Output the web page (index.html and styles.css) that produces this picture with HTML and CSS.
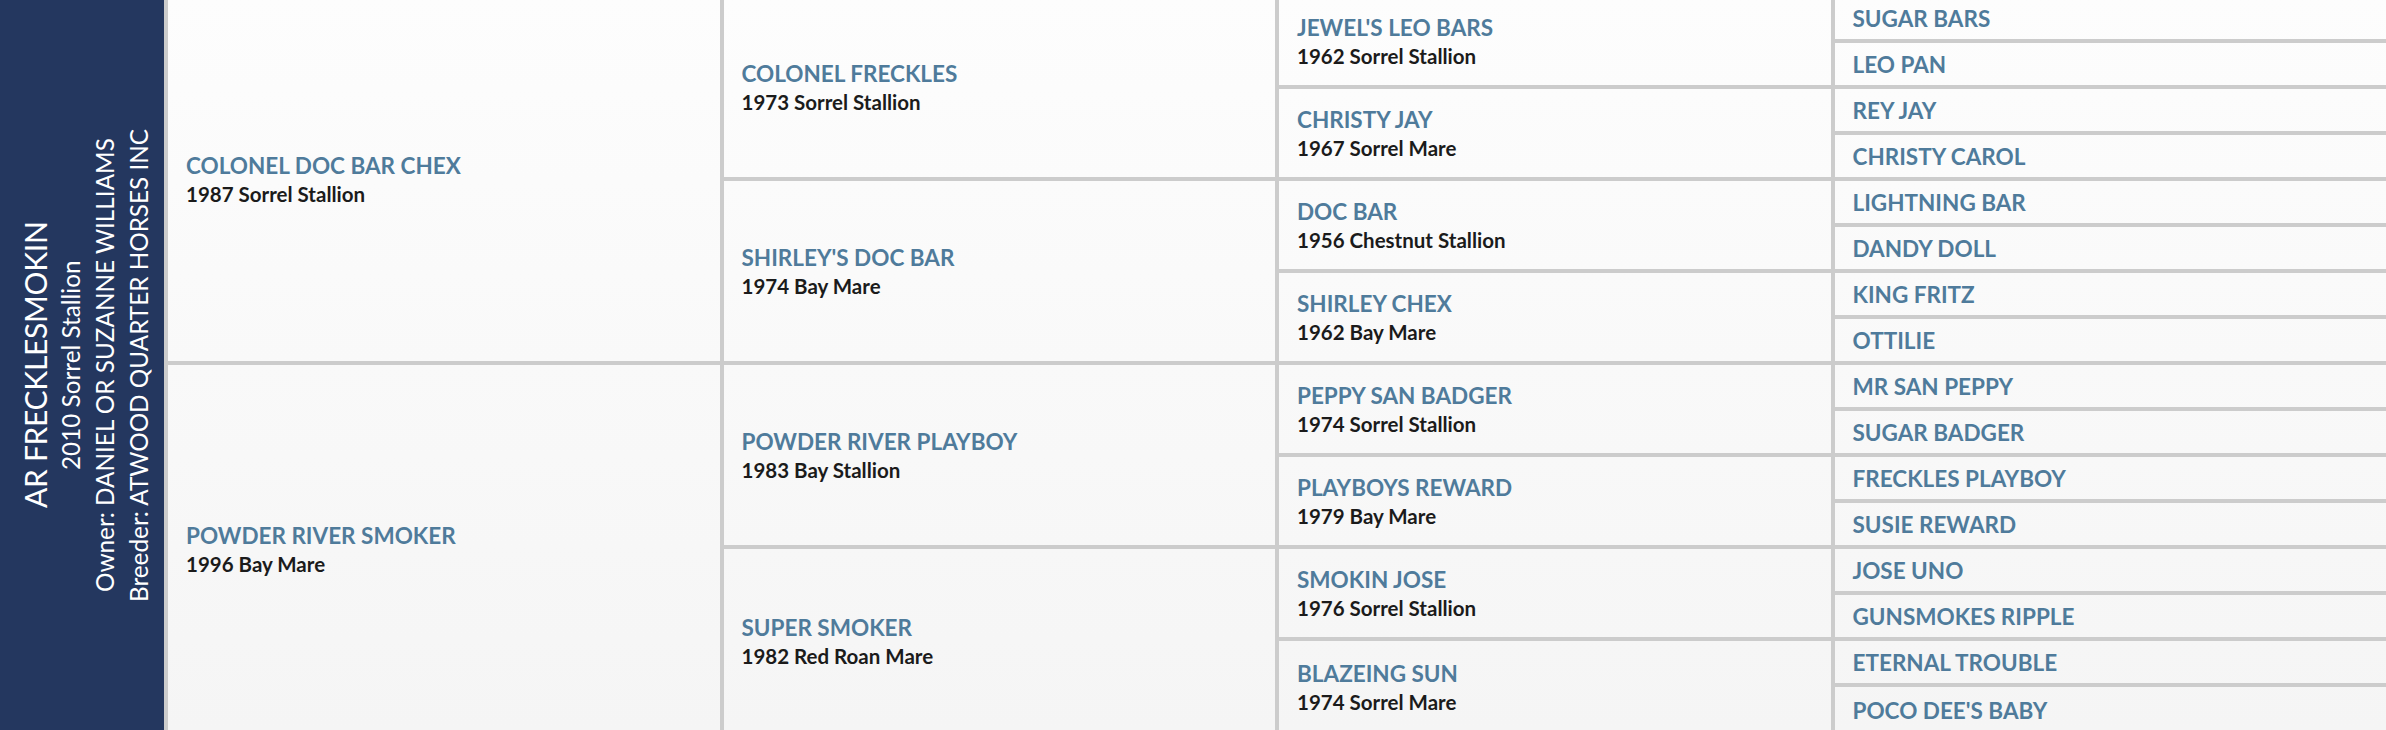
FILE: index.html
```html
<!DOCTYPE html>
<html lang="en">
<head>
<meta charset="utf-8">
<title>AR FRECKLESMOKIN Pedigree</title>
<link rel="stylesheet" href="styles.css">
</head>
<body>
<div class="pedigree">
  <aside class="subject">
    <div class="subject-text">
      <div class="subject-name">AR FRECKLESMOKIN</div>
      <div class="subject-line">2010 Sorrel Stallion</div>
      <div class="subject-line">Owner: DANIEL OR SUZANNE WILLIAMS</div>
      <div class="subject-line">Breeder: ATWOOD QUARTER HORSES INC</div>
    </div>
  </aside>
  <div class="tree">
    <div class="cell g1"><div class="name">COLONEL DOC BAR CHEX</div><div class="info">1987 Sorrel Stallion</div></div>
    <div class="cell g1 last"><div class="name">POWDER RIVER SMOKER</div><div class="info">1996 Bay Mare</div></div>

    <div class="cell g2"><div class="name">COLONEL FRECKLES</div><div class="info">1973 Sorrel Stallion</div></div>
    <div class="cell g2"><div class="name">SHIRLEY'S DOC BAR</div><div class="info">1974 Bay Mare</div></div>
    <div class="cell g2"><div class="name">POWDER RIVER PLAYBOY</div><div class="info">1983 Bay Stallion</div></div>
    <div class="cell g2 last"><div class="name">SUPER SMOKER</div><div class="info">1982 Red Roan Mare</div></div>

    <div class="cell g3"><div class="name">JEWEL'S LEO BARS</div><div class="info">1962 Sorrel Stallion</div></div>
    <div class="cell g3"><div class="name">CHRISTY JAY</div><div class="info">1967 Sorrel Mare</div></div>
    <div class="cell g3"><div class="name">DOC BAR</div><div class="info">1956 Chestnut Stallion</div></div>
    <div class="cell g3"><div class="name">SHIRLEY CHEX</div><div class="info">1962 Bay Mare</div></div>
    <div class="cell g3"><div class="name">PEPPY SAN BADGER</div><div class="info">1974 Sorrel Stallion</div></div>
    <div class="cell g3"><div class="name">PLAYBOYS REWARD</div><div class="info">1979 Bay Mare</div></div>
    <div class="cell g3"><div class="name">SMOKIN JOSE</div><div class="info">1976 Sorrel Stallion</div></div>
    <div class="cell g3 last"><div class="name">BLAZEING SUN</div><div class="info">1974 Sorrel Mare</div></div>

    <div class="cell g4"><div class="name">SUGAR BARS</div></div>
    <div class="cell g4"><div class="name">LEO PAN</div></div>
    <div class="cell g4"><div class="name">REY JAY</div></div>
    <div class="cell g4"><div class="name">CHRISTY CAROL</div></div>
    <div class="cell g4"><div class="name">LIGHTNING BAR</div></div>
    <div class="cell g4"><div class="name">DANDY DOLL</div></div>
    <div class="cell g4"><div class="name">KING FRITZ</div></div>
    <div class="cell g4"><div class="name">OTTILIE</div></div>
    <div class="cell g4"><div class="name">MR SAN PEPPY</div></div>
    <div class="cell g4"><div class="name">SUGAR BADGER</div></div>
    <div class="cell g4"><div class="name">FRECKLES PLAYBOY</div></div>
    <div class="cell g4"><div class="name">SUSIE REWARD</div></div>
    <div class="cell g4"><div class="name">JOSE UNO</div></div>
    <div class="cell g4"><div class="name">GUNSMOKES RIPPLE</div></div>
    <div class="cell g4"><div class="name">ETERNAL TROUBLE</div></div>
    <div class="cell g4 last"><div class="name">POCO DEE'S BABY</div></div>
  </div>
</div>
</body>
</html>
```
FILE: styles.css
```css
html, body {
  margin: 0;
  padding: 0;
  height: 730px;
  overflow: hidden;
  background: #f8f8f8;
  font-family: Lato, "Noto Sans", sans-serif;
}

.pedigree {
  display: flex;
  height: 730px;
}

.subject {
  flex: 0 0 164px;
  width: 164px;
  height: 730px;
  background: #24375f;
  color: #ffffff;
  display: flex;
  align-items: center;
  justify-content: flex-start;
}

.subject-text {
  writing-mode: vertical-rl;
  transform: rotate(180deg);
  height: 730px;
  text-align: center;
  margin-left: 16px;
  font-weight: 400;
  white-space: nowrap;
}

.subject-name {
  font-size: 30px;
  line-height: 38px;
  letter-spacing: -0.3px;
}

.subject-line {
  font-size: 24.3px;
  line-height: 34px;
}

.tree {
  flex: 1 1 auto;
  display: grid;
  grid-template-columns: repeat(4, 1fr);
  grid-template-rows: repeat(16, 46px);
  grid-auto-flow: column;
  margin-top: -3px;
  background: linear-gradient(#fdfdfd, #f5f5f5);
}

.cell {
  box-sizing: border-box;
  border-left: 4px solid #cccccc;
  border-bottom: 4px solid #cccccc;
  padding: 0 18px;
  display: flex;
  flex-direction: column;
  justify-content: center;
  min-width: 0;
}

.cell.last {
  border-bottom: 0;
}

.g1 { grid-row: span 8; }
.g2 { grid-row: span 4; }
.g3 { grid-row: span 2; }
.g4 { grid-row: span 1; }

.name {
  color: #4f7b9b;
  font-weight: 700;
  font-size: 22.5px;
  line-height: 29px;
  text-transform: uppercase;
  white-space: nowrap;
}

.info {
  color: #1b1b1b;
  font-weight: 700;
  font-size: 20.5px;
  line-height: 28px;
  white-space: nowrap;
}
```
